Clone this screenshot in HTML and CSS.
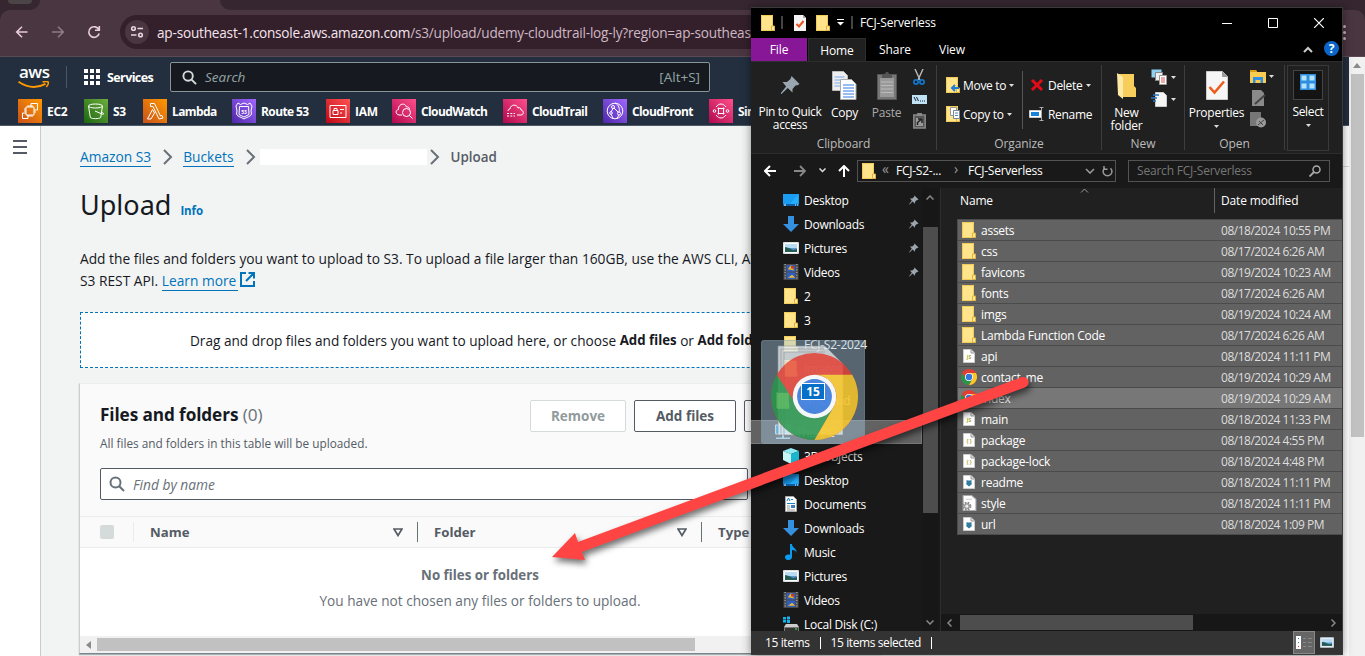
FILE: index.html
```html
<!DOCTYPE html>
<html lang="en">
<head>
<meta charset="utf-8">
<title>Upload objects - S3 bucket</title>
<link rel="stylesheet" href="styles.css">
</head>
<body>
<svg class="defs" aria-hidden="true">
  <symbol id="folder" viewBox="0 0 14 16"><path d="M0 0h12v11.5h1.5V16H0z" fill="#ffe48c"/><path d="M.5.5h11v11M.5.5v15h10" fill="none" stroke="#f0cd58"/><path d="M10.5 11h3v4.5h-3z" fill="#ffe9a0" stroke="#dfb43d"/></symbol>
  <symbol id="desktop" viewBox="0 0 16 12"><path d="M0 0h16v12H0z" fill="#1a9cf0"/><path d="M15 1v8L6 11z" fill="#23b1ff"/><path d="M0 10h16v2H0z" fill="#0a5fa8"/><path d="M1 11h2M12 11h1M14 11h1" stroke="#fff"/></symbol>
  <symbol id="down" viewBox="0 0 16 16"><path d="M5 0h6v8h5l-8 8-8-8h5z" fill="#3590e0"/></symbol>
  <symbol id="picture" viewBox="0 0 16 12"><path d="M.5.5h15v11H.5z" fill="#5c9bd1" stroke="#ddd"/><path d="M2 2h12v4H2z" fill="#b9dcf5"/><path d="M2 5l4 1 4 2 4-1v3H2z" fill="#245c58"/><path d="M1.5 1.5h13v9h-13z" fill="none" stroke="#fff"/></symbol>
  <symbol id="video" viewBox="0 0 14 15"><path d="M0 0h14v15H0z" fill="#4a4a4a"/><path d="M3 1h8v6H3zM3 8h8v6H3z" fill="#2e5fc0"/><path d="M4 5l3-4 3 5z" fill="#e2b634"/><circle cx="8.500" cy="3" r="1.500" fill="#c63a35"/><path d="M4 13l4-3 3 3z" fill="#e8b83a"/><path d="M1.500 0v15M12.500 0v15" stroke="#bbb" stroke-dasharray="1 1.500"/></symbol>
  <symbol id="music" viewBox="0 0 12 16"><path d="M5 0h2c0 4 5 4 4.500 9-.4-2-1.800-3-4.500-3v7c0 4-7 4-7 .3C0 10.500 3 10 5 10.800z" fill="#0a9bf5"/></symbol>
  <symbol id="doc" viewBox="0 0 12 16"><path d="M.5.5h8l3 3v12H.5z" fill="#fff" stroke="#aaa"/><path d="M2 5l1.500-3L5 5M6 3.500h2M2 7.500h8" stroke="#1783c9" fill="none"/><path d="M2 10h3M2 12h3M2 14h8" stroke="#999"/><path d="M6 9h4v3H6z" fill="#3b7fc4"/></symbol>
  <symbol id="cube" viewBox="0 0 16 16"><path d="M0 3l8-3 8 3-8 3z" fill="#8feaf2"/><path d="M0 3l8 3v10l-8-4z" fill="#c6f6f8"/><path d="M16 3L8 6v10l8-4z" fill="#19b6cf"/></symbol>
  <symbol id="pc" viewBox="0 0 16 15"><path d="M.5.5h15v9H.5z" fill="#42b4f0" stroke="#d7eefb"/><path d="M7 10h2v3H7zM1 13h14v1.500H1z" fill="#b9dff2"/></symbol>
  <symbol id="disk" viewBox="0 0 16 16"><path d="M0 1h3v2.500H0zM4 .5h3v3H4zM0 4h3v2.500H0zM4 4h3v3H4z" fill="#12b4ef"/><path d="M3 8h11l2 3H1z" fill="#ccc"/><path d="M1 11h15v5H1z" fill="#777"/><path d="M2 12h13v3H2z" fill="#333"/><path d="M12 13h2" stroke="#3f3"/></symbol>
  <symbol id="pin" viewBox="0 0 10 10"><path d="M5.500.5l4 4-1 .6-1 .1L6 7v1.800L3.600 6.500.5 9.500 0 9.300l2.800-3.600L1 3.500h2.200L5 2z" fill="#9aa6af"/></symbol>
  <symbol id="chrome" viewBox="0 0 48 48"><circle cx="24" cy="24" r="24" fill="#e33e32"/><path d="M3.200 12A24 24 0 0 0 24 48l10.400-18L24 34a12 12 0 0 1-10.400-6z" fill="#26964a"/><path d="M24 12h20.800A24 24 0 0 1 24 48l10.400-18A12 12 0 0 0 24 12z" fill="#fac724"/><circle cx="24" cy="24" r="12" fill="#fff"/><circle cx="24" cy="24" r="9.600" fill="#3277e0"/></symbol>
  <symbol id="page" viewBox="0 0 12 14"><path d="M.5.5h7.500L11.500 4v9.500H.5z" fill="#fff" stroke="#ccc"/><path d="M8 .5V4h3.500" fill="#ddd" stroke="#999"/></symbol>
  <symbol id="md" viewBox="0 0 12 14"><use href="#page"/><path d="M3.500 5L5 5.500h2L8.500 5v3L9 9l-3 2.500L3 9l.5-1z" fill="#317d9e"/></symbol>
  <symbol id="gear" viewBox="0 0 14 15"><path d="M1.500.5h8L13.500 4v10.500h-12z" fill="#fff" stroke="#aaa"/><path d="M4 4h6" stroke="#ccc"/><circle cx="5" cy="10.500" r="3" fill="#ddd" stroke="#888" stroke-width="2.500" stroke-dasharray="1.400 1"/><circle cx="5" cy="10.500" r="2" fill="#eee" stroke="#999"/></symbol>
  <symbol id="lens" viewBox="0 0 16 16"><circle cx="6.500" cy="6.500" r="5" fill="none" stroke="currentColor" stroke-width="2"/><path d="M10.200 10.200l4.800 4.800" stroke="currentColor" stroke-width="2"/></symbol>
  <symbol id="chev" viewBox="0 0 10 16"><path d="M1 1l7 7-7 7" fill="none" stroke="#687078" stroke-width="2"/></symbol>
  <symbol id="tri" viewBox="0 0 10 9"><path d="M1 1h8L5 7.500z" fill="none" stroke="#545b64" stroke-width="1.700"/></symbol>
  <symbol id="caret" viewBox="0 0 5 3"><path d="M0 0h5L2.500 3z" fill="#ddd"/></symbol>
  <linearGradient id="g-orange" x1="0" y1="1" x2="1" y2="0"><stop stop-color="#c8511b"/><stop offset="1" stop-color="#f90"/></linearGradient>
  <linearGradient id="g-green" x1="0" y1="1" x2="1" y2="0"><stop stop-color="#1b660f"/><stop offset="1" stop-color="#6cae3e"/></linearGradient>
  <linearGradient id="g-purple" x1="0" y1="1" x2="1" y2="0"><stop stop-color="#4d27a8"/><stop offset="1" stop-color="#a166ff"/></linearGradient>
  <linearGradient id="g-red" x1="0" y1="1" x2="1" y2="0"><stop stop-color="#bd0816"/><stop offset="1" stop-color="#ff5252"/></linearGradient>
  <linearGradient id="g-pink" x1="0" y1="1" x2="1" y2="0"><stop stop-color="#b0084d"/><stop offset="1" stop-color="#ff4f8b"/></linearGradient>
</svg>

<div class="browser">
  <div class="tabstrip"><div class="tab-prev"><i></i></div><div class="tab-gap"></div><div class="tab-rest"></div></div>
  <div class="toolbar">
    <svg class="tb" viewBox="0 0 16 16"><path d="M13.500 8H3M8 2.700L2.700 8 8 13.300" class="tbl"/></svg>
    <svg class="tb dim" viewBox="0 0 16 16"><path d="M2 8h11M8 2.700L13.300 8 8 13.300" class="tbl"/></svg>
    <svg class="tb" viewBox="0 0 16 16"><path d="M13 6A5.300 5.300 0 1 0 13.200 9.500M13.300 2v4.300H9" class="tbl"/></svg>
    <div class="omnibox">
      <span class="tune"><svg width="14" height="14" viewBox="0 0 14 14"><g fill="none" stroke="#e8d5df" stroke-width="1.600"><circle cx="3.500" cy="3.500" r="1.800"/><path d="M7.500 3.500H13M1 10h5.500"/><circle cx="10.500" cy="10" r="1.800"/></g></svg></span>
      <span class="url"><b>ap-southeast-1.console.aws.amazon.com</b>/s3/upload/udemy-cloudtrail-log-ly?region=ap-southeast-1</span>
    </div>
    <div class="dots"><i></i><i></i><i></i></div>
  </div>

  <div class="viewport">
    <div class="page">
      <header class="nav">
        <div class="nav-top">
          <div class="logo"><span>aws</span><svg width="32" height="8" viewBox="0 0 32 8"><path d="M.5.800C9 6.500 19 7.500 27.500 2.800" fill="none" stroke="#f90" stroke-width="1.900"/><path d="M24.500 1c2.500-.7 4.500-.8 5.500-.2.700 1-.2 3.500-1.700 5.200" fill="none" stroke="#f90" stroke-width="1.500"/></svg></div>
          <div class="nav-sep"></div>
          <svg class="grid" viewBox="0 0 16 16" fill="#fff"><path d="M0 0h4v4H0zM6 0h4v4H6zM12 0h4v4h-4zM0 6h4v4H0zM6 6h4v4H6zM12 6h4v4h-4zM0 12h4v4H0zM6 12h4v4H6zM12 12h4v4h-4z"/></svg>
          <span class="services">Services</span>
          <div class="nav-search"><svg width="15" height="15"><use href="#lens"/></svg><em>Search</em><span>[Alt+S]</span></div>
        </div>
        <div class="favs">
          <div class="fav w1"><svg viewBox="0 0 24 24"><path d="M0 0h24v24H0z" fill="url(#g-orange)"/><g class="ln"><path d="M8 8h8v8H8zM8 14H4.500v5.500H10V16M13 8V4.500h6.500V11H16"/><path d="M10 6v2M12 6v2M14 6v2M10 16v2M14 16v2M6 10h2M6 12h2M16 13h2M12 16v2" /></g></svg>EC2</div>
          <div class="fav w2"><svg viewBox="0 0 24 24"><path d="M0 0h24v24H0z" fill="url(#g-green)"/><g class="ln"><ellipse cx="11.500" cy="7" rx="7" ry="2"/><path d="M4.500 7l1.800 11.500c1.500 1.500 9 1.500 10.400 0L18.500 7M11 12l7 3c2.500 1 2-1-.5-2"/></g></svg>S3</div>
          <div class="fav w3"><svg viewBox="0 0 24 24"><path d="M0 0h24v24H0z" fill="url(#g-orange)"/><path class="ln" d="M7.500 4.500h4l6 12.500 1.500-.5 1 2.500-4 1L10 7.500H7.500zM9.500 10.500l2 3.500-3.500 6H4.500z"/></svg>Lambda</div>
          <div class="fav w4"><svg viewBox="0 0 24 24"><path d="M0 0h24v24H0z" fill="url(#g-purple)"/><g class="ln"><path d="M6 4l2.500 1.500L12 4l3.500 1.500L18 4l2 3-1 5 .5 3c-1 3-5 3-7.500 5-2.500-2-6.500-2-7.500-5L5 12 4 7z"/><path d="M7.500 7.500h9l.5 8-5 2.500-5-2.500z"/></g><text x="12" y="14.500" class="tiny">53</text></svg>Route 53</div>
          <div class="fav w5"><svg viewBox="0 0 24 24"><path d="M0 0h24v24H0z" fill="url(#g-red)"/><g class="ln"><path d="M4 6.500h16v12H4zM7 11.500h5v4H7zM8 11.500V9.500h3v2M14 10.500h4M14 14h2"/></g></svg>IAM</div>
          <div class="fav w6"><svg viewBox="0 0 24 24"><path d="M0 0h24v24H0z" fill="url(#g-pink)"/><g class="ln"><path d="M10 16H7c-4-1-3.500-5-.5-5.500C6 5 13 3 14.500 8c1.500-.5 3 .5 3 2"/><circle cx="14.500" cy="13.500" r="4"/><path d="M17.500 16.500l3 3"/></g></svg>CloudWatch</div>
          <div class="fav w7"><svg viewBox="0 0 24 24"><path d="M0 0h24v24H0z" fill="url(#g-pink)"/><g class="ln"><path d="M5 12c0-1.500 1-2 2-2 .5-5 7-5 8-1 2-1 3 .5 3 2 3 .5 3 5 0 5h-4"/><path d="M4 14.500h8M4 17h8" stroke-dasharray="2 1.300"/></g></svg>CloudTrail</div>
          <div class="fav w8"><svg viewBox="0 0 24 24"><path d="M0 0h24v24H0z" fill="url(#g-purple)"/><g class="ln"><circle cx="12" cy="12" r="7.800"/><circle cx="10" cy="8" r="1.500"/><circle cx="8" cy="14" r="1.300"/><circle cx="16" cy="14.500" r="1.500"/><path d="M10 9.500l-2 3.500M11 9l4.500 4.500M8 15l2 4M12 4c4 2 5 6 4 9M16 16l-2 3"/></g></svg>CloudFront</div>
          <div class="fav w9"><svg viewBox="0 0 24 24"><path d="M0 0h24v24H0z" fill="url(#g-pink)"/><g class="ln"><path d="M9.500 9.500h5v5h-5zM8.500 9.500h1v-1M15.500 9.500h-1v-1M8.500 14.500h1v1M15.500 14.500h-1v1M7 8c3-4 7-4 10 0M7 16c3 4 7 4 10 0"/><circle cx="5.500" cy="12" r="1.300"/><circle cx="18.500" cy="12" r="1.300"/></g></svg>Simple</div>
        </div>
      </header>
      <div class="body">
        <aside class="rail"><i></i><i></i><i></i></aside>
        <main>
          <nav class="crumbs"><a>Amazon S3</a><svg><use href="#chev"/></svg><a>Buckets</a><svg><use href="#chev"/></svg><span class="masked"></span><svg><use href="#chev"/></svg><b>Upload</b></nav>
          <div class="title"><h1>Upload</h1><a>Info</a></div>
          <p class="intro">Add the files and folders you want to upload to S3. To upload a file larger than 160GB, use the AWS CLI, AWS SDK or Amazon<br>S3 REST API. <a>Learn more <svg width="15" height="15" viewBox="0 0 15 15"><path d="M6 1H1v13h13V9M8.500 1H14v5.500M14 1L6 9" fill="none" stroke="#0073bb" stroke-width="2"/></svg></a></p>
          <div class="drop">Drag and drop files and folders you want to upload here, or choose <b>Add files</b> or <b>Add folder</b>.</div>
          <section class="card">
            <div class="card-head">
              <div><h2>Files and folders <span>(0)</span></h2><p>All files and folders in this table will be uploaded.</p></div>
              <div class="btns"><span class="btn off">Remove</span><span class="btn">Add files</span><span class="btn more">Add folder</span></div>
            </div>
            <div class="find"><svg width="16" height="16"><use href="#lens"/></svg><em>Find by name</em></div>
            <div class="thead"><i class="check"></i><div class="th name">Name<svg><use href="#tri"/></svg></div><div class="th fold">Folder<svg><use href="#tri"/></svg></div><div class="th last">Type</div></div>
            <div class="empty"><b>No files or folders</b><span>You have not chosen any files or folders to upload.</span></div>
            <div class="hbar"><svg width="5" height="8" viewBox="0 0 5 8"><path d="M5 0v8L0 4z" fill="#8a8a8a"/></svg><i></i></div>
          </section>
        </main>
        <aside class="help"></aside>
      </div>
    </div>
    <div class="vbar"><svg width="8" height="5" viewBox="0 0 8 5"><path d="M0 5h8L4 0z" fill="#8a8a8a"/></svg><i></i></div>
  </div>
</div>

<div class="explorer">
  <div class="titlebar">
    <svg class="q1" width="14" height="16"><use href="#folder"/></svg><i class="bar"></i>
    <svg class="q2" width="12" height="16" viewBox="0 0 12 16"><path d="M0 0h9l3 3v13H0z" fill="#f4f4f4"/><path d="M9 0v3h3" fill="#aaa"/><path d="M2.500 9l2.500 2.500L9.500 6" fill="none" stroke="#e8531c" stroke-width="2"/></svg>
    <svg class="q3" width="14" height="16"><use href="#folder"/></svg>
    <svg class="q4" width="7" height="7" viewBox="0 0 7 7"><path d="M0 .5h7" stroke="#fff"/><path d="M0 3h7L3.500 6.500z" fill="#fff"/></svg><i class="bar"></i>
    <span>FCJ-Serverless</span>
    <div class="wc"><svg width="10" height="10" viewBox="0 0 10 10"><path d="M0 5.500h10" stroke="#fff"/></svg><svg width="10" height="10" viewBox="0 0 10 10"><path d="M.5.5h9v9h-9z" fill="none" stroke="#fff"/></svg><svg width="10" height="10" viewBox="0 0 10 10"><path d="M0 0l10 10M10 0L0 10" stroke="#fff" stroke-width="1.200"/></svg></div>
  </div>
  <div class="tabs"><span class="file">File</span><span class="home">Home</span><span>Share</span><span>View</span>
    <svg class="up" width="10" height="7" viewBox="0 0 10 7"><path d="M1 6l4-4 4 4" fill="none" stroke="#ccc" stroke-width="2"/></svg><b class="q">?</b></div>
  <div class="ribbon">
    <div class="grp g1">
      <div class="row">
        <div class="big b1"><svg width="21" height="21" viewBox="0 0 10 10"><use href="#pin"/></svg>Pin to Quick<br>access</div>
        <div class="big b2"><svg width="25" height="29" viewBox="0 0 25 29"><path d="M.5.5h11l4 4v15H.5z" fill="#eee" stroke="#bbb"/><path d="M2.500 6h10M2.500 9h10M2.500 12h10M2.500 15h10" stroke="#7aacf0"/><path d="M8.500 8.500h11l4.500 4.500v15.500H8.500z" fill="#fff" stroke="#aaa"/><path d="M11 14h11M11 17h11M11 20h11M11 23h11M11 26h11" stroke="#2f7be8"/></svg>Copy</div>
        <div class="big b3"><svg width="20" height="29" viewBox="0 0 20 29"><path d="M.5 3.500h19v25H.5z" fill="#777" stroke="#555"/><path d="M3 7h14v19H3z" fill="#999"/><path d="M4 11h12M4 14.500h12M4 18h12M4 21.500h12" stroke="#bbb"/><path d="M5 3h3a2 2 0 0 1 4 0h3v4H5z" fill="#555"/></svg>Paste</div>
        <div class="col"><svg width="12" height="17" viewBox="0 0 12 17"><path d="M2 0l5 11M10 0L5 11" stroke="#bbb" stroke-width="1.400"/><g fill="none" stroke="#1176cf" stroke-width="1.700"><circle cx="3" cy="13" r="2.100"/><circle cx="9" cy="13" r="2.100"/></g></svg>
          <svg width="15" height="9" viewBox="0 0 15 9"><path d="M0 0h15v9H0z" fill="#bfe2f5"/><path d="M2 2l2 4M4.500 2l2 4M8 6h1M10 6h1M12 6h1" stroke="#223"/></svg>
          <svg width="13" height="16" viewBox="0 0 13 16"><path d="M.8 2h11.400v13H.8z" fill="#555" stroke="#888" stroke-width="1.500"/><path d="M4 0h5v3H4z" fill="#888"/><path d="M3 5h7v8H3z" fill="#999"/><path d="M4.500 12V9.500L8 6.500M5 6h4v4" stroke="#222" stroke-width="1.500" fill="none"/></svg></div>
      </div><label>Clipboard</label></div>
    <div class="grp g2">
      <div class="row">
        <div class="stack s1"><div><svg width="14" height="16"><use href="#folder"/><path d="M13 11H6M9 8l-3 3 3 3" stroke="#217bd2" stroke-width="2" fill="none"/></svg>Move to<svg class="ct"><use href="#caret"/></svg></div><div><svg width="14" height="16"><use href="#folder"/><path d="M4.500 1.500h6v8h-6z" fill="#fff" stroke="#999"/><path d="M7.500 4.500h6v8h-6z" fill="#fff" stroke="#789"/><path d="M9 7h3M9 9.500h3" stroke="#58a"/></svg>Copy to<svg class="ct"><use href="#caret"/></svg></div></div>
        <div class="stack s2"><div><svg width="14" height="14" viewBox="0 0 14 14"><path d="M2 2l10 10M12 2L2 12" stroke="#e30b17" stroke-width="3"/></svg>Delete<svg class="ct"><use href="#caret"/></svg></div><div><svg width="16" height="14" viewBox="0 0 16 14"><path d="M.5 3.500h12v7H.5z" fill="#fff" stroke="#ccc"/><path d="M2 5h8v4H2z" fill="#1783db"/><path d="M10.500.5h4M12.500.5v13M10.500 13.500h4" stroke="#aaa"/></svg>Rename</div></div>
      </div><label>Organize</label></div>
    <div class="grp g3">
      <div class="row">
        <div class="big b4"><svg width="19" height="28" viewBox="0 0 19 28"><path d="M1 2h16v12l2 2v9H5z" fill="#f7cd5c"/><path d="M0 1l6 4v22l-5-4z" fill="#ffe9a6"/></svg>New<br>folder</div>
        <div class="col c2"><div><svg width="17" height="17" viewBox="0 0 17 17"><path d="M.5.5h10v8H.5z" fill="#8fd0f0"/><path d="M4.500 3.500h7v8h-7z" fill="#eee" stroke="#888"/><path d="M8.500 6.500h7v9h-7z" fill="#fff" stroke="#999"/><path d="M10 9h4M10 11h4M10 13h4" stroke="#d55"/></svg><svg class="ct"><use href="#caret"/></svg></div><div><svg width="17" height="17" viewBox="0 0 17 17"><path d="M4.500 1.500h8l3 3v11h-11z" fill="#f5f5f5" stroke="#ccc"/><path d="M2 4h6M0 7h6M2 10h3" stroke="#2478c8" stroke-width="1.500"/></svg><svg class="ct"><use href="#caret"/></svg></div></div>
      </div><label>New</label></div>
    <div class="grp g4">
      <div class="row">
        <div class="big b5"><svg width="22" height="29" viewBox="0 0 22 29"><path d="M.5.5h16l5 5v23H.5z" fill="#f6f6f6" stroke="#ccc"/><path d="M16.500.5v5h5" fill="#999" stroke="#999"/><path d="M3.500 16l5 5.500L18 10.500" fill="none" stroke="#f0591b" stroke-width="2.500"/></svg>Properties<svg class="ct"><use href="#caret"/></svg></div>
        <div class="col c3"><div><svg width="16" height="15" viewBox="0 0 16 15"><path d="M0 1h6l1 2h9v11H0z" fill="#f8cb52"/><path d="M0 1h6l1 2H0z" fill="#dc9c12"/><path d="M3 14V8h10v6h-2.500v-3h-5v3z" fill="#2f8fe0"/></svg><svg class="ct"><use href="#caret"/></svg></div><div><svg width="16" height="16" viewBox="0 0 16 16"><path d="M2 0h9l3 3v13H2z" fill="#8a8a8a"/><path d="M5 14l10-9" stroke="#444" stroke-width="2"/></svg></div><div><svg width="16" height="16" viewBox="0 0 16 16"><path d="M0 0h11v14H0z" fill="#777"/><circle cx="11" cy="10.500" r="5" fill="#999"/><path d="M8 13l6-5M9 9l4 4" stroke="#444"/></svg></div></div>
      </div><label>Open</label></div>
    <div class="select"><span><svg width="16" height="16" viewBox="0 0 16 16"><path d="M0 0h16v16H0z" fill="#2d8fe0"/><path d="M1.500 1.500h5v5h-5zM9.500 1.500h5v5h-5zM1.500 9.500h5v5h-5zM9.500 9.500h5v5h-5z" fill="#b5e1fb"/></svg></span>Select<svg class="ct"><use href="#caret"/></svg></div>
  </div>
  <div class="addr">
    <svg class="a1" width="12" height="12" viewBox="0 0 12 12"><path d="M12 6H1M6 1L1 6l5 5" fill="none" stroke="#fff" stroke-width="2"/></svg>
    <svg class="a2" width="12" height="12" viewBox="0 0 12 12"><path d="M0 6h11M6 1l5 5-5 5" fill="none" stroke="#888" stroke-width="1.800"/></svg>
    <svg class="a3" width="7" height="5" viewBox="0 0 7 5"><path d="M.5.5l3 3 3-3" fill="none" stroke="#ddd" stroke-width="1.500"/></svg>
    <svg class="a4" width="12" height="12" viewBox="0 0 12 12"><path d="M6 12V1M1 6l5-5 5 5" fill="none" stroke="#fff" stroke-width="2"/></svg>
    <div class="path"><svg width="14" height="16"><use href="#folder"/></svg><s>«</s><span class="p1">FCJ-S2-...</span><s>›</s><span>FCJ-Serverless</span>
      <svg class="pd" width="10" height="6" viewBox="0 0 10 6"><path d="M1 1l4 4 4-4" fill="none" stroke="#999" stroke-width="1.600"/></svg><svg class="pr" width="11" height="12" viewBox="0 0 11 12"><path d="M2.800 3A4.400 4.400 0 1 0 8.500 3.200M2 1v3.300h3.500" fill="none" stroke="#999" stroke-width="1.500"/></svg></div>
    <div class="srch">Search FCJ-Serverless<svg width="12" height="12" viewBox="0 0 12 12"><circle cx="7.500" cy="4.500" r="3.500" fill="none" stroke="#aaa" stroke-width="1.500"/><path d="M5 7l-4.500 4.500" stroke="#aaa" stroke-width="1.800"/></svg></div>
  </div>
  <div class="panes">
    <div class="tree">
      <div class="n"><svg><use href="#desktop"/></svg>Desktop<svg class="p"><use href="#pin"/></svg></div>
      <div class="n"><svg><use href="#down"/></svg>Downloads<svg class="p"><use href="#pin"/></svg></div>
      <div class="n"><svg><use href="#picture"/></svg>Pictures<svg class="p"><use href="#pin"/></svg></div>
      <div class="n"><svg><use href="#video"/></svg>Videos<svg class="p"><use href="#pin"/></svg></div>
      <div class="n"><svg><use href="#folder"/></svg>2</div>
      <div class="n"><svg><use href="#folder"/></svg>3</div>
      <div class="n"><svg><use href="#folder"/></svg>FCJ-S2-2024</div>
      <div class="n"><svg><use href="#folder"/></svg>images</div>
      <div class="n root own"><svg><use href="#folder"/></svg>ownCloud</div>
      <div class="n root sel"><svg><use href="#pc"/></svg>This PC</div>
      <div class="n"><svg><use href="#cube"/></svg>3D Objects</div>
      <div class="n"><svg><use href="#desktop"/></svg>Desktop</div>
      <div class="n"><svg><use href="#doc"/></svg>Documents</div>
      <div class="n"><svg><use href="#down"/></svg>Downloads</div>
      <div class="n"><svg><use href="#music"/></svg>Music</div>
      <div class="n"><svg><use href="#picture"/></svg>Pictures</div>
      <div class="n"><svg><use href="#video"/></svg>Videos</div>
      <div class="n"><svg><use href="#disk"/></svg>Local Disk (C:)</div>
    </div>
    <div class="tbar"><svg width="8" height="5" viewBox="0 0 8 5"><path d="M.5 4.500L4 1l3.500 3.500" fill="none" stroke="#888" stroke-width="1.500"/></svg><i></i><svg width="8" height="5" viewBox="0 0 8 5"><path d="M.5.500L4 4 7.500.5" fill="none" stroke="#888" stroke-width="1.500"/></svg></div>
    <div class="files">
      <div class="fh"><span>Name</span><svg width="9" height="5" viewBox="0 0 9 5"><path d="M1 4.500L4.500 1 8 4.500" fill="none" stroke="#999"/></svg><span class="dm">Date modified</span></div>
      <div class="list">
        <div class="f"><svg><use href="#folder"/></svg><span>assets</span><time>08/18/2024 10:55 PM</time></div>
        <div class="f"><svg><use href="#folder"/></svg><span>css</span><time>08/17/2024 6:26 AM</time></div>
        <div class="f"><svg><use href="#folder"/></svg><span>favicons</span><time>08/19/2024 10:23 AM</time></div>
        <div class="f"><svg><use href="#folder"/></svg><span>fonts</span><time>08/17/2024 6:26 AM</time></div>
        <div class="f"><svg><use href="#folder"/></svg><span>imgs</span><time>08/19/2024 10:24 AM</time></div>
        <div class="f"><svg><use href="#folder"/></svg><span>Lambda Function Code</span><time>08/17/2024 6:26 AM</time></div>
        <div class="f d"><svg viewBox="0 0 12 14"><use href="#page"/><text x="6" y="10" class="js">JS</text></svg><span>api</span><time>08/18/2024 11:11 PM</time></div>
        <div class="f"><svg><use href="#chrome"/></svg><span>contact_me</span><time>08/19/2024 10:29 AM</time></div>
        <div class="f hot"><svg><use href="#chrome"/></svg><span>index</span><time>08/19/2024 10:29 AM</time></div>
        <div class="f d"><svg viewBox="0 0 12 14"><use href="#page"/><text x="6" y="10" class="js">JS</text></svg><span>main</span><time>08/18/2024 11:33 PM</time></div>
        <div class="f d"><svg viewBox="0 0 12 14"><use href="#page"/><text x="6" y="9.500" class="js">{ }</text></svg><span>package</span><time>08/18/2024 4:55 PM</time></div>
        <div class="f d"><svg viewBox="0 0 12 14"><use href="#page"/><text x="6" y="9.500" class="js">{ }</text></svg><span>package-lock</span><time>08/18/2024 4:48 PM</time></div>
        <div class="f d"><svg><use href="#md"/></svg><span>readme</span><time>08/18/2024 11:11 PM</time></div>
        <div class="f"><svg><use href="#gear"/></svg><span>style</span><time>08/18/2024 11:11 PM</time></div>
        <div class="f d"><svg><use href="#md"/></svg><span>url</span><time>08/18/2024 1:09 PM</time></div>
      </div>
      <div class="fbar"><svg width="5" height="8" viewBox="0 0 5 8"><path d="M4.500.5L1 4l3.500 3.500" fill="none" stroke="#888" stroke-width="1.500"/></svg><i></i><svg width="5" height="8" viewBox="0 0 5 8"><path d="M.500.5L4 4 .500 7.500" fill="none" stroke="#888" stroke-width="1.500"/></svg></div>
    </div>
  </div>
  <div class="status"><span>15 items</span><i></i><span>15 items selected</span><i></i>
    <b><svg width="16" height="13" viewBox="0 0 16 13"><path d="M0 0h5v13H0z" fill="#fff"/><path d="M2 2.500h1M2 6.500h1" stroke="#2478c8"/><path d="M2 10.500h1" stroke="#d22"/><path d="M7 2.500h3M12 2.500h4M7 6.500h3M12 6.500h4M7 10.500h3M12 10.500h4" stroke="#888"/></svg></b><svg class="pv" width="14" height="11"><use href="#picture"/></svg></div>
</div>

<svg class="ghost" width="104" height="104" viewBox="0 0 104 104">
  <rect x=".5" y=".5" width="103" height="103" rx="2" fill="#a5c6dc" fill-opacity=".44" stroke="#8aa5b5" stroke-opacity=".5"/>
  <path d="M17 6h47l18 18v71H17z" fill="#eef2f4" fill-opacity=".72" stroke="#8a9296" stroke-opacity=".6"/>
  <path d="M20 95V9h43M23 95V12h41" fill="none" stroke="#888" stroke-opacity=".5"/>
  <g opacity=".84"><svg x="10" y="13" width="87" height="87"><use href="#chrome"/></svg></g>
  <g opacity=".22"><path d="M24 21h12v16H24z" fill="#ff9855"/><path d="M16 53h12v16H16z" fill="#afff75"/></g>
  <rect x="40.500" y="43.500" width="23" height="16" fill="#0670c9" stroke="#fff"/><text x="52" y="56" class="count">15</text>
</svg>

<svg class="arrow" width="1365" height="656" viewBox="0 0 1365 656"><path d="M552 557l23-24 3 9L1022 377a5.500 5.500 0 0 1 4 10L582 552l3 8z" fill="#ff4444"/></svg>
</body>
</html>
```
FILE: styles.css
```css
* { box-sizing: border-box; }
html, body { margin: 0; height: 656px; overflow: hidden; }
body { position: relative; width: 1365px; font-family: "Open Sans", "Noto Sans", sans-serif; background: #fff; }
.defs { position: absolute; width: 0; height: 0; }
svg { flex: none; display: block; }
i, em { flex: none; }

/* browser chrome */
.browser { display: flex; flex-direction: column; height: 656px; background: #35262f; }
.tabstrip { display: flex; height: 10px; background: #4a3641; }
.tab-prev { width: 40px; background: #35262f; border-bottom-right-radius: 10px; }
.tab-prev i { display: block; width: 24px; height: 4px; margin-left: 8px; background: #4c4548; border-radius: 0 0 12px 12px; }
.tab-gap { width: 180px; }
.tab-rest { flex: 1; background: #35262f; border-bottom-left-radius: 10px; }
.toolbar { display: flex; align-items: center; height: 47px; background: #4a3641; border-bottom: 1px solid #5b4a54; border-radius: 10px 10px 0 0; padding: 0 0 2px 14px; }
.tb { width: 16px; height: 16px; margin-right: 20px; }
.tbl { fill: none; stroke: #e8ccd9; stroke-width: 1.600; }
.dim { opacity: .45; }
.omnibox { display: flex; align-items: center; flex: 1; height: 34px; margin-left: -2px; border-radius: 17px; background: #33202b; padding-left: 5px; }
.tune { display: flex; align-items: center; justify-content: center; width: 24px; height: 24px; border-radius: 50%; background: #4a3641; margin-right: 8px; }
.url { font-size: 13.600px; letter-spacing: -.2px; color: #cfb8c3; white-space: nowrap; }
.url b { font-weight: 400; color: #f6e4ee; }
.dots { display: flex; flex-direction: column; gap: 3px; margin: 0 19px 0 8px; width: 3px; }
.dots i { width: 3px; height: 3px; border-radius: 50%; background: #cbb4c0; }
.viewport { display: flex; flex: 1; min-height: 0; }
.page { flex: 1; min-width: 0; }

/* AWS header */
.nav { height: 69px; background: #232f3e; border-bottom: 1px solid #4d5865; color: #fff; overflow: hidden; }
.nav-top { display: flex; align-items: center; height: 40px; padding-left: 18px; }
.logo { width: 32px; height: 26px; }
.logo span { display: block; font-size: 17px; line-height: 15px; height: 18px; font-weight: 600; letter-spacing: -.5px; padding-left: 1px; }
.logo svg { margin-top: -1px; }
.nav-sep { width: 1px; height: 22px; background: #4b5663; margin: 0 17px 0 16px; }
.grid { width: 16px; height: 16px; margin-right: 7px; }
.services { width: 63px; font-size: 12.500px; font-weight: 700; letter-spacing: -.6px; }
.nav-search { display: flex; align-items: center; width: 540px; height: 30px; background: #161a20; border: 1px solid #879596; border-radius: 2px; padding: 0 9px 0 11px; color: #95a5a6; font-size: 13.500px; }
.nav-search svg { color: #d5dbdb; }
.nav-search em { margin-left: 8px; flex: 1; }
.favs { display: flex; padding: 2px 0 0 18px; width: 1300px; }
.fav { display: flex; align-items: center; gap: 5px; height: 24px; flex: none; font-size: 12px; font-weight: 700; letter-spacing: -.6px; }
.fav > svg { width: 24px; height: 24px; }
.ln { fill: none; stroke: #fff; stroke-width: 1; }
.tiny { fill: #fff; font-size: 5px; text-anchor: middle; letter-spacing: 0; }
.w1 { width: 66px; } .w2 { width: 59px; } .w3 { width: 89px; } .w4 { width: 94px; } .w5 { width: 66px; }
.w6 { width: 111px; } .w7 { width: 100px; } .w8 { width: 106px; }
.w1, .w2, .w5 { letter-spacing: -.3px; }

/* console page */
.body { display: flex; height: 530px; overflow: hidden; }
.rail { display: flex; flex-direction: column; gap: 4px; width: 41px; background: #fff; border-right: 1px solid #c5cccc; padding: 14px 0 0 13px; }
.rail i { width: 14px; height: 2px; background: #545b64; }
main { flex: 1; background: #f2f3f3; padding: 19px 0 0 39px; color: #16191f; font-size: 13.750px; }
.help { width: 30px; background: linear-gradient(#fff 40px, #d5dbdb 40px, #d5dbdb 41px, #fff 41px); }
.crumbs { display: flex; align-items: center; height: 24px; }
.crumbs a { color: #0073bb; border-bottom: 1px solid #0073bb; line-height: 18px; }
.crumbs svg { width: 10px; height: 16px; margin: 0 10px 0 12px; }
.crumbs b { color: #545b64; font-weight: 600; font-size: 13.400px; }
.crumbs .masked + svg { margin: 0 11px 0 3px; }
.crumbs .masked { width: 167px; height: 16px; background: #fff; margin-left: -6px; }
.title { display: flex; align-items: baseline; gap: 9px; height: 37px; margin-top: 17px; }
h1 { margin: 0; font: 400 27px/37px "Noto Sans", sans-serif; }
.title a { color: #0073bb; font-size: 11.500px; font-weight: 700; letter-spacing: -.1px; }
.intro { margin: 25px 0 0; line-height: 22px; white-space: nowrap; height: 64px; }
.intro a { color: #0073bb; display: inline-flex; line-height: 18px; gap: 4px; border-image: linear-gradient(90deg, #0073bb 76px, transparent 76px) 1; border-bottom: 1px solid; }
.drop { display: flex; align-items: center; justify-content: center; width: 800px; height: 56px; border: 1px dashed #0073bb; background: #fff; white-space: pre; font-size: 13.650px; }
.drop b { font-size: 13.250px; }
.card { width: 802px; height: 271px; margin: 15px 0 0 -1px; background: linear-gradient(#fafafa 164px, #fff 164px); border: 1px solid #eaeded; border-left-color: #c8cdcd; border-bottom-color: #7b858c; box-shadow: 0 1px 1px rgba(0,28,36,.3); }
.card-head { display: flex; justify-content: space-between; height: 84px; padding: 16px 21px 0 20px; background: #fafafa; }
h2 { margin: 0; font-size: 17.200px; line-height: 30px; font-weight: 700; letter-spacing: -.1px; }
h2 span { font-weight: 400; color: #687078; }
.card-head p { margin: 3px 0 0; font-size: 11.800px; line-height: 20px; color: #545b64; white-space: nowrap; }
.btns { display: flex; gap: 8px; }
.btn { height: 32px; line-height: 30px; width: 102px; border: 1px solid #545b64; border-radius: 2px; background: #fff; color: #545b64; font-weight: 700; font-size: 13.500px; text-align: center; }
.btn.off { width: 96px; border-color: #d5dbdb; color: #919b9c; }
.btn.more { width: 115px; }
.find { display: flex; align-items: center; gap: 8px; width: 648px; height: 32px; margin-left: 20px; border: 1px solid #545b64; border-radius: 2px; background: #fff; padding-left: 8px; color: #687078; }
.find svg { color: #687078; }
.thead { display: flex; align-items: center; height: 32px; margin-top: 16px; border: 1px solid #eaeded; border-width: 1px 0; padding-left: 20px; font-weight: 700; font-size: 13.200px; color: #545b64; overflow: hidden; }
.check { width: 14px; height: 14px; border-radius: 2px; background: #d5dbdb; margin-right: 19px; }
.th { display: flex; flex: none; justify-content: space-between; align-items: center; height: 20px; padding: 0 14px 0 16px; border-left: 1px solid #687078; width: 284px; }
.th.last { width: 178px; }
.th.name { border-color: #eaeded; }
.th svg { width: 10px; height: 9px; }
.empty { display: flex; flex-direction: column; align-items: center; height: 88px; padding-top: 16px; color: #687078; line-height: 22px; gap: 4px; }
.empty b { font-size: 13.300px; }
.empty span { font-size: 13.650px; }
.hbar { display: flex; align-items: center; height: 17px; background: #f1f1f1; padding-left: 6px; }
.hbar i { width: 598px; height: 13px; background: #c1c1c1; margin-left: 6px; }
.vbar { width: 16px; display: flex; flex-direction: column; align-items: center; background: #f1f1f1; padding-top: 6px; }
.vbar i { width: 13px; height: 363px; margin-top: 6px; background: #c1c1c1; }

/* file explorer window */
.explorer { position: absolute; left: 751px; top: 7px; width: 592px; height: 648px; display: flex; flex-direction: column; background: #191919; border: 1px solid #3b3b3b; border-width: 1px 1px 1px 0; box-shadow: 0 1px 9px rgba(0,0,0,.45); color: #fff; font-size: 12px; letter-spacing: -.25px; }
.ct { width: 5px; height: 3px; }
.titlebar { display: flex; align-items: center; height: 30px; background: #000; padding: 0 0 1px 10px; }
.bar { width: 2px; height: 13px; background: #444; }
.q1 { margin-right: 6px; } .q2 { margin: 0 10px 0 11px; } .q3 { margin-right: 7px; } .q4 { margin-right: 7px; }
.titlebar span { flex: 1; margin-left: 7px; letter-spacing: -.15px; }
.wc { display: flex; gap: 36px; padding-right: 18px; }
.tabs { display: flex; height: 23px; background: #000; line-height: 23px; letter-spacing: -.1px; }
.tabs span { width: 56px; text-align: center; margin-right: 1px; }
.tabs .file { background: #881798; }
.tabs .home { width: 58px; background: #202020; border: 1px solid #2d2d2d; border-bottom: 0; }
.up { margin: 8px 11px 0 auto; }
.tabs .q { width: 15px; height: 15px; line-height: 15px; border-radius: 50%; background: #0a66c8; text-align: center; margin: 3px 3px 0 0; }
.ribbon { display: flex; height: 93px; background: #202020; border: 1px solid #2d2d2d; border-width: 1px 0; line-height: 13px; }
.grp { display: flex; flex-direction: column; border-right: 1px solid #3d3d3d; margin: 3px 0; }
.grp label { text-align: center; color: #bbb; padding-top: 2px; letter-spacing: -.1px; }
.row { display: flex; height: 71px; }
.g1 { width: 186px; } .g2 { width: 165px; } .g3 { width: 83px; } .g4 { width: 100px; }
.big { display: flex; flex-direction: column; align-items: center; text-align: center; white-space: nowrap; }
.big svg:first-child { margin-bottom: 6px; }
.b1 { width: 78px; letter-spacing: -.35px; } .b1 svg:first-child { margin: 10px 0 10px; height: 20px; }
.b2 { width: 31px; padding-top: 6px; } .b3 { width: 53px; padding-top: 6px; color: #aaa; }
.b4 { width: 49px; padding-top: 7px; }
.b5 { width: 63px; padding-top: 6px; }
.big .ct { margin-top: 6px; }
.col { display: flex; flex-direction: column; align-items: center; width: 12px; gap: 9px; padding-top: 4px; }
.col > div { display: flex; align-items: center; gap: 3px; }
.c2 { width: 24px; gap: 5px; }
.c3 { width: 25px; margin-left: 2px; gap: 6px; align-items: flex-start; }
.stack { display: flex; flex-direction: column; gap: 13px; padding: 12px 0 0 9px; width: 84px; white-space: nowrap; letter-spacing: -.3px; }
.stack div { display: flex; align-items: center; gap: 3px; height: 16px; }
.s2 div { gap: 4px; }
.s2 { margin: 6px 0 0 1px; padding: 6px 0 0 7px; width: 79px; height: 58px; border-left: 1px solid #555; }
.s2 div:last-child { gap: 3px; margin-left: -1px; }
.select { width: 42px; margin: 3px 0 2px 2px; border: 1px solid #393939; display: flex; flex-direction: column; align-items: center; padding-top: 4px; letter-spacing: -.35px; }
.select span { width: 30px; height: 30px; background: #141414; border: 1px solid #444; display: flex; justify-content: center; padding-top: 3px; margin-bottom: 5px; }
.select .ct { margin-top: 6px; }
.addr { display: flex; align-items: center; height: 34px; padding-bottom: 1px; }
.a1 { margin-left: 13px; } .a2 { margin-left: 18px; } .a3 { margin-left: 13px; } .a4 { margin-left: 12px; }
.path { display: flex; align-items: center; width: 259px; height: 22px; margin-left: 7px; border: 1px solid #535353; padding-left: 4px; }
.path s { text-decoration: none; color: #999; margin-left: 6px; width: 9px; font-size: 14px; line-height: 14px; padding-bottom: 3px; }
.path span { margin-left: 5px; }
.path .p1 { width: 52px; }
.pd { margin: 0 7px 0 auto; } .pr { margin-right: 2px; }
.srch { display: flex; align-items: center; justify-content: space-between; width: 202px; height: 22px; margin-left: 12px; border: 1px solid #535353; padding: 0 8px; color: #777; letter-spacing: -.2px; }
.panes { display: flex; height: 443px; }
.tree { width: 171px; overflow: hidden; }
.n { display: flex; align-items: center; height: 24px; padding-left: 32px; }
.n svg:first-child { width: 16px; height: 16px; margin-right: 5px; }
.n .p { width: 10px; height: 10px; margin: 0 3px 0 auto; }
.root { padding-left: 24px; }
.own { margin: 8px 0; }
.sel { background: #626262; border: 1px solid #777; border-left: 0; }
.tbar { width: 16px; display: flex; flex-direction: column; align-items: center; justify-content: space-between; background: #171717; padding: 7px 0 6px; }
.tbar i { width: 15px; height: 286px; background: #4d4d4d; margin-bottom: 80px; }
.files { display: flex; flex-direction: column; width: 402px; margin-left: 2px; background: #202020; border-left: 1px solid #2d2d2d; }
.fh { display: flex; height: 31px; padding-left: 19px; line-height: 26px; letter-spacing: -.15px; }
.fh span { width: 120px; }
.fh .dm { width: auto; margin-left: 125px; padding-left: 6px; border-left: 1px solid #636363; height: 25px; }
.list { margin-left: 16px; border: 1px solid #4b4b4b; border-right: 0; height: 316px; }
.f { display: flex; align-items: center; height: 21px; background: #626262; border-bottom: 1px solid #4b4b4b; padding-left: 3px; }
.f svg { width: 16px; height: 16px; }
.f.d svg { height: 14px; }
.f span { width: 240px; margin-left: 4px; }
.f time { color: #dedede; letter-spacing: -.480px; white-space: nowrap; }
.hot { background: #777; }
.js { font: 700 5px "Open Sans", sans-serif; fill: #a8a82c; text-anchor: middle; letter-spacing: 0; }
.fbar { display: flex; align-items: center; height: 17px; margin-top: auto; background: #171717; padding: 0 6px 0 6px; }
.fbar i { width: 233px; height: 15px; background: #4d4d4d; margin: 0 auto 0 8px; }
.status { display: flex; align-items: center; flex: 1; background: #333; padding-left: 14px; letter-spacing: -.4px; }
.status i { width: 1px; height: 12px; background: #fff; margin: 0 10px; }
.status b { display: flex; align-items: center; justify-content: center; width: 22px; height: 23px; margin-left: auto; background: #666; border: 1px solid #888; }
.pv { margin: 0 8px 0 5px; }

/* drag image and pointer annotation */
.ghost { position: absolute; left: 761px; top: 340px; }
.count { font-size: 12px; font-weight: 700; fill: #fff; text-anchor: middle; }
.arrow { position: absolute; left: 0; top: 0; filter: drop-shadow(2px 4px 3px rgba(0,0,0,.55)); }
```
